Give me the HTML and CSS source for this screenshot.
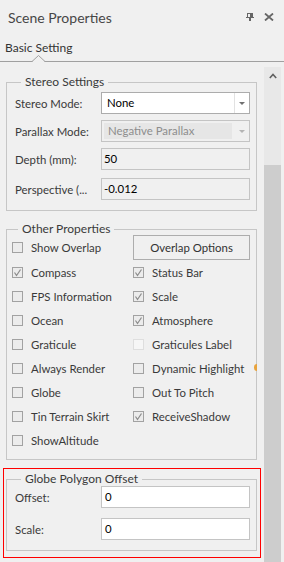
FILE: index.html
```html
<!DOCTYPE html>
<html lang="en">
<head>
  <meta charset="UTF-8">
  <title>Scene Properties</title>
  <link rel="stylesheet" href="styles.css">
</head>
<body>

<div class="titlebar">
  <span class="title">Scene Properties</span>
  <span class="title-icons">
    <svg width="8" height="8" viewBox="0 0 8 8"><rect x="1.5" y="0.5" width="5" height="4" fill="none" stroke="#666"/><rect x="0" y="4" width="8" height="1" fill="#666"/><rect x="3" y="5" width="2" height="3" fill="#666"/><rect x="4" y="1" width="2" height="3" fill="#666"/></svg>
    <svg width="10" height="8" viewBox="0 0 10 8"><path d="M1 0.5 L9 7.5 M9 0.5 L1 7.5" stroke="#666" stroke-width="1.8"/></svg>
  </span>
</div>

<div class="tabs">
  <span class="tab">Basic Setting</span>
  <svg class="notch" width="13" height="7" viewBox="0 0 13 7"><polygon points="0,7 6.5,0.5 13,7" fill="#f0f0f0"/><polyline points="0,6.5 6.5,0.5 13,6.5" fill="none" stroke="#a0a0a0"/></svg>
</div>

<div class="main">
  <div class="content">

    <fieldset class="group stereo">
      <legend>Stereo Settings</legend>
      <div class="row">
        <label>Stereo Mode:</label>
        <div class="combo">
          <span class="combo-text">None</span>
          <span class="combo-btn"><i class="arrow"></i></span>
        </div>
      </div>
      <div class="row">
        <label>Parallax Mode:</label>
        <div class="combo disabled">
          <span class="combo-text">Negative Parallax</span>
          <span class="combo-btn"><i class="arrow"></i></span>
        </div>
      </div>
      <div class="row">
        <label>Depth (mm):</label>
        <div class="field readonly">50</div>
      </div>
      <div class="row gap">
        <label>Perspective (...</label>
        <div class="field readonly">-0.012</div>
      </div>
    </fieldset>

    <fieldset class="group other">
      <legend>Other Properties</legend>
      <div class="checks">
        <div class="check"><span class="cb"></span>Show Overlap</div>
        <div class="check"><button class="btn">Overlap Options</button></div>

        <div class="check"><span class="cb on"><svg width="9" height="9" viewBox="0 0 9 9"><polyline points="1.5,4.5 3.5,7.5 7.5,1.5" fill="none" stroke="#8a8a8a" stroke-width="1.2"/></svg></span>Compass</div>
        <div class="check"><span class="cb on"><svg width="9" height="9" viewBox="0 0 9 9"><polyline points="1.5,4.5 3.5,7.5 7.5,1.5" fill="none" stroke="#8a8a8a" stroke-width="1.2"/></svg></span>Status Bar</div>

        <div class="check"><span class="cb"></span>FPS Information</div>
        <div class="check"><span class="cb on"><svg width="9" height="9" viewBox="0 0 9 9"><polyline points="1.5,4.5 3.5,7.5 7.5,1.5" fill="none" stroke="#8a8a8a" stroke-width="1.2"/></svg></span>Scale</div>

        <div class="check"><span class="cb"></span>Ocean</div>
        <div class="check"><span class="cb on"><svg width="9" height="9" viewBox="0 0 9 9"><polyline points="1.5,4.5 3.5,7.5 7.5,1.5" fill="none" stroke="#8a8a8a" stroke-width="1.2"/></svg></span>Atmosphere</div>

        <div class="check"><span class="cb"></span>Graticule</div>
        <div class="check"><span class="cb off"></span>Graticules Label</div>

        <div class="check"><span class="cb"></span>Always Render</div>
        <div class="check hint"><span class="cb"></span>Dynamic Highlight<i class="dot"></i></div>

        <div class="check"><span class="cb"></span>Globe</div>
        <div class="check"><span class="cb"></span>Out To Pitch</div>

        <div class="check"><span class="cb"></span>Tin Terrain Skirt</div>
        <div class="check"><span class="cb on"><svg width="9" height="9" viewBox="0 0 9 9"><polyline points="1.5,4.5 3.5,7.5 7.5,1.5" fill="none" stroke="#8a8a8a" stroke-width="1.2"/></svg></span>ReceiveShadow</div>

        <div class="check"><span class="cb"></span>ShowAltitude</div>
      </div>
    </fieldset>

    <div class="highlight">
      <fieldset class="group offset">
        <legend>Globe Polygon Offset</legend>
        <div class="row">
          <label>Offset:</label>
          <div class="field">0</div>
        </div>
        <div class="row">
          <label>Scale:</label>
          <div class="field">0</div>
        </div>
      </fieldset>
    </div>

  </div>

  <div class="scrollbar">
    <div class="scroll-up">
      <svg width="8" height="6" viewBox="0 0 8 6"><polyline points="0.8,5 4,1.5 7.2,5" fill="none" stroke="#606060" stroke-width="1.6"/></svg>
    </div>
    <div class="thumb"></div>
  </div>
</div>

</body>
</html>
```

FILE: styles.css
```css
body {
  margin: 0;
  width: 284px;
  height: 562px;
  overflow: hidden;
  background: #f0f0f0;
  font-family: Lato, 'Liberation Sans', sans-serif;
  font-size: 11.4px;
  color: #3a3a3a;
}

.titlebar {
  height: 35px;
  display: flex;
  align-items: center;
  justify-content: space-between;
  padding: 0 10px 0 8px;
}

.title {
  font-size: 14px;
  color: #474747;
}

.title-icons {
  display: flex;
  align-items: center;
  gap: 10px;
  margin-top: -1px;
}

.tabs {
  position: relative;
  height: 26px;
  border-bottom: 1px solid #a0a0a0;
  box-sizing: content-box;
}

.tab {
  display: block;
  padding: 5px 0 0 5px;
  line-height: 16px;
  font-size: 12px;
  color: #333;
}

.notch {
  position: absolute;
  left: 32px;
  bottom: -1px;
  display: block;
}

.main {
  display: flex;
}

.content {
  width: 264px;
  box-sizing: border-box;
  padding: 14px 7px 0 6px;
}

.group {
  margin: 0;
  border: 1px solid #c6c6c6;
  min-width: 0;
}

.group legend {
  margin-left: 6px;
  padding: 0 4px;
  line-height: 12px;
  font-size: 12px;
}

.stereo {
  padding: 4px 6px 10px 8px;
}

.row {
  display: flex;
  align-items: center;
}

.row + .row {
  margin-top: 6px;
}

.row.gap {
  margin-top: 8px;
}

.row label {
  width: 86px;
  flex: none;
}

.combo {
  width: 149px;
  height: 22px;
  box-sizing: border-box;
  border: 1px solid #acacac;
  background: #fff;
  display: flex;
}

.combo-text {
  flex: 1;
  padding-left: 5px;
  line-height: 20px;
  color: #000;
}

.combo-btn {
  width: 14px;
  border-left: 1px solid #e2e2e2;
  display: flex;
  align-items: center;
  justify-content: center;
}

.arrow {
  border-left: 3px solid transparent;
  border-right: 3px solid transparent;
  border-top: 3px solid #707070;
}

.combo.disabled {
  background: #f0f0f0;
  border-color: #c4c4c4;
}

.combo.disabled .combo-text {
  background: #e6e6e6;
  margin: 2px 3px 2px 2px;
  padding-left: 4px;
  line-height: 16px;
  color: #8d8d8d;
}

.combo.disabled .combo-btn {
  border-left: none;
}

.combo.disabled .arrow {
  border-top-color: #b4b4b4;
}

.field {
  width: 149px;
  height: 22px;
  box-sizing: border-box;
  border: 1px solid #c4c4c4;
  background: #fff;
  padding-left: 3px;
  line-height: 20px;
  color: #000;
}

.field.readonly {
  background: #f0f0f0;
  padding-left: 2px;
}

.other {
  margin-top: 12px;
  padding: 0 6px 7px 5px;
}

.checks {
  display: grid;
  grid-template-columns: 121px 1fr;
  grid-auto-rows: 24px;
  grid-template-rows: 25px;
}

.check {
  display: flex;
  align-items: center;
  white-space: nowrap;
}

.hint {
  position: relative;
}

.dot {
  position: absolute;
  left: 121px;
  top: 8px;
  width: 3px;
  height: 7px;
  background: #e8a33d;
  border-radius: 4px 0 0 4px;
}

.cb {
  width: 11px;
  height: 11px;
  box-sizing: border-box;
  border: 1px solid #a2a2a2;
  background: #ececec;
  margin-right: 8px;
  flex: none;
  display: flex;
  align-items: center;
  justify-content: center;
}

.cb.off {
  border-color: #dedede;
  background: #f6f6f6;
}

.btn {
  width: 117px;
  height: 25px;
  border: 1px solid #adadad;
  background: #f0f0f0;
  font: inherit;
  color: #333;
  padding: 0;
}

.highlight {
  margin: 8px -4px 0 -3px;
  border: 1px solid #ff0000;
  padding: 4px 3px 6px 2px;
}

.offset {
  padding: 1px 6px 10px 8px;
}

.offset .row + .row {
  margin-top: 10px;
}

.scrollbar {
  width: 17px;
  margin-top: 5px;
  height: 495px;
  background: #e8e8e8;
  display: flex;
  flex-direction: column;
}

.scroll-up {
  height: 17px;
  display: flex;
  justify-content: center;
  align-items: center;
}

.thumb {
  margin-top: 81px;
  flex: 1;
  background: #cdcdcd;
}
```
